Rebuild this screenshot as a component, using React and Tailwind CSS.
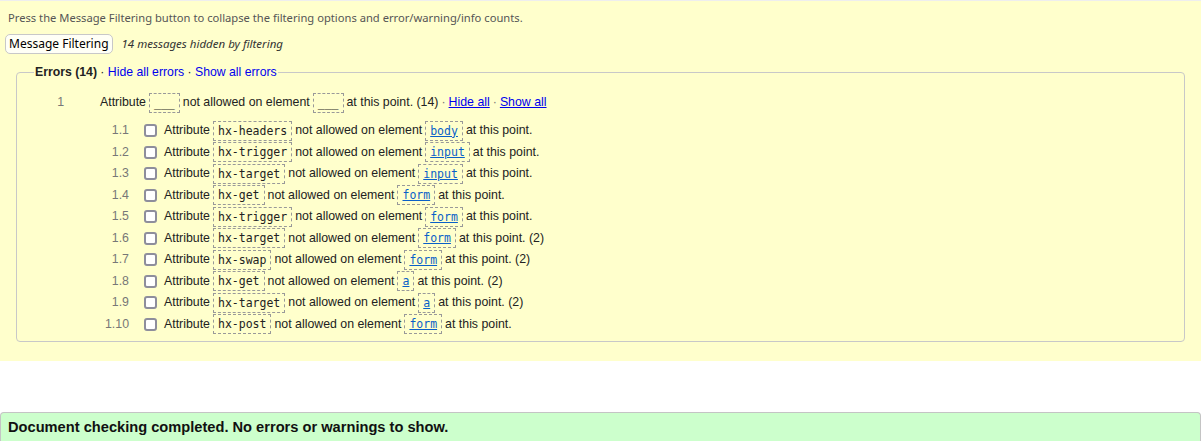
import React from 'react';

const ROWS = [
  { n: '1.1', attr: 'hx-headers', el: 'body', count: '' },
  { n: '1.2', attr: 'hx-trigger', el: 'input', count: '' },
  { n: '1.3', attr: 'hx-target', el: 'input', count: '' },
  { n: '1.4', attr: 'hx-get', el: 'form', count: '' },
  { n: '1.5', attr: 'hx-trigger', el: 'form', count: '' },
  { n: '1.6', attr: 'hx-target', el: 'form', count: ' (2)' },
  { n: '1.7', attr: 'hx-swap', el: 'form', count: ' (2)' },
  { n: '1.8', attr: 'hx-get', el: 'a', count: ' (2)' },
  { n: '1.9', attr: 'hx-target', el: 'a', count: ' (2)' },
  { n: '1.10', attr: 'hx-post', el: 'form', count: '' },
];

const Code = ({ children, link }) => (
  <code
    className={`inline-block mx-[3px] px-[4px] border border-dashed border-[#999] leading-[18px] text-[11.5px] ${
      link ? 'text-[#0a5fc8] underline' : 'text-[#222]'
    }`}
    style={{ fontFamily: '"DejaVu Sans Mono", monospace' }}
  >
    {children}
  </code>
);

const App = () => {
  return (
    <div className="w-[1201px] h-[441px] bg-white overflow-hidden" style={{ fontFamily: '"Liberation Sans", Arial, sans-serif' }}>
      {/* Filter panel */}
      <div className="bg-[#ffffcc] border-t border-[#eee] h-[361px] pl-[5px] pr-[16px]">
        <p
          className="text-[11.2px] text-[#555] pl-[3px] pt-[9px] leading-[16px]"
          style={{ fontFamily: '"Noto Sans", sans-serif' }}
        >
          Press the Message Filtering button to collapse the filtering options and error/warning/info counts.
        </p>

        <div className="flex items-center mt-[8px] h-[20px]" style={{ fontFamily: '"Noto Sans", sans-serif' }}>
          <button className="h-[20px] px-[3px] bg-[#fffff6] border border-[#c8c8c8] rounded-[5px] text-[12px] text-black leading-none">
            Message Filtering
          </button>
          <span className="ml-[9px] text-[11.5px] italic text-[#333]">14 messages hidden by filtering</span>
        </div>

        <fieldset className="ml-[11px] mt-[11px] border border-[#c8c8c8] rounded-[4px] h-[277px]">
          <legend className="ml-[17px] px-px text-[12.25px] leading-[14px] text-[#222]">
            <b>Errors (14)</b>
            <span> · </span>
            <a className="text-[#0000ee]">Hide all errors</a>
            <span> · </span>
            <a className="text-[#0000ee]">Show all errors</a>
          </legend>

          <div className="flex items-center mt-[13px] h-[21px] text-[12.35px] text-[#222]">
            <span className="w-[47px] text-right text-[#777]">1</span>
            <span className="ml-[36px]">Attribute</span>
            <Code>___</Code>
            <span>not allowed on element</span>
            <Code>___</Code>
            <span>at this point. (14)</span>
            <span className="mx-[3px] text-[#777]">·</span>
            <a className="text-[#0000ee] underline">Hide all</a>
            <span className="mx-[3px] text-[#777]">·</span>
            <a className="text-[#0000ee] underline">Show all</a>
          </div>

          <div className="mt-[7px]">
            {ROWS.map((r) => (
              <div key={r.n} className="flex items-center h-[21.5px] text-[12.35px] text-[#222]">
                <span className="w-[112px] text-right text-[#777]">{r.n}</span>
                <span className="ml-[15px] w-[13px] h-[13px] border-2 border-[#8e8e9c] rounded-[3px] bg-white" />
                <span className="ml-[7px]">Attribute</span>
                <Code>{r.attr}</Code>
                <span>not allowed on element</span>
                <Code link>{r.el}</Code>
                <span>at this point.{r.count}</span>
              </div>
            ))}
          </div>
        </fieldset>
      </div>

      {/* Status bar */}
      <div className="mt-[51px] h-[30px] bg-[#ccffcc] border border-b-0 border-[#c4c4c4] rounded-t-[4px] px-[7px] flex items-center">
        <span className="text-[14.65px] font-bold text-[#111]">Document checking completed. No errors or warnings to show.</span>
      </div>
    </div>
  );
};

export default App;
